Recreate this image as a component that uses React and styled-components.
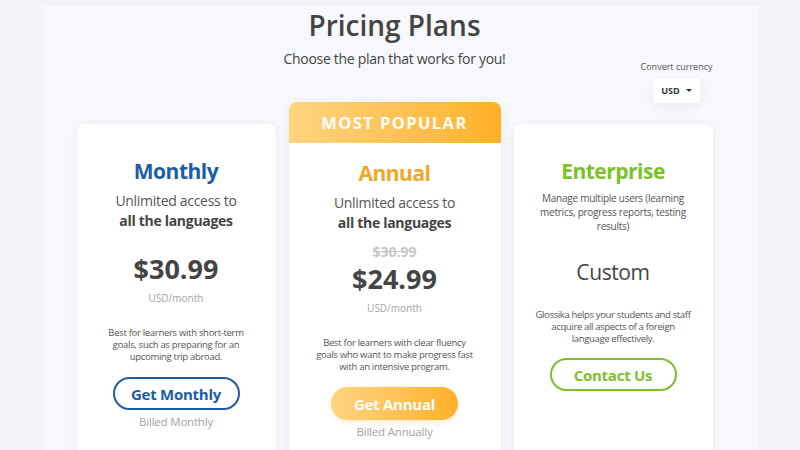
import React from "react";
import styled, { createGlobalStyle } from "styled-components";

const Global = createGlobalStyle`
  html, body { margin: 0; padding: 0; }
  body {
    background: #f3f4f9;
    font-family: "Open Sans", "Noto Sans", Arial, sans-serif;
    height: 450px;
    overflow: hidden;
  }
`;

const Page = styled.div`
  width: 715px;
  margin: 0 auto;
  min-height: 450px;
  background: #f7f8fc;
`;

const TopStrip = styled.div`
  height: 2px;
  background: #f2f3f6;
  box-shadow: 0 1px 4px rgba(0, 0, 0, 0.12);
`;

const Content = styled.div`
  width: 636px;
  margin-left: 34px;
  display: flex;
  flex-direction: column;
`;

const Title = styled.h1`
  margin: 6px 0 0;
  text-align: center;
  font-size: 28px;
  line-height: 34px;
  font-weight: 600;
  color: #444;
`;

const SubRow = styled.div`
  margin-top: 7px;
  display: grid;
  grid-template-columns: 1fr auto 1fr;
  align-items: start;
`;

const Subtitle = styled.p`
  grid-column: 2;
  margin: 0;
  font-size: 14px;
  letter-spacing: -0.3px;
  line-height: 20px;
  color: #444;
`;

const Currency = styled.div`
  grid-column: 3;
  justify-self: end;
  margin-top: 11px;
  display: flex;
  flex-direction: column;
  align-items: center;
`;

const CurrencyLabel = styled.span`
  font-size: 9px;
  line-height: 14px;
  color: #555;
`;

const CurrencySelect = styled.div`
  margin-top: 4px;
  width: 47px;
  height: 25px;
  background: #fff;
  border-radius: 2px;
  box-shadow: 0 3px 12px rgba(0, 0, 0, 0.06);
  display: flex;
  align-items: center;
  justify-content: center;
  gap: 6px;
  font-size: 9px;
  font-weight: 700;
  color: #333;
`;

const Caret = styled.span`
  width: 0;
  height: 0;
  border-left: 3px solid transparent;
  border-right: 3px solid transparent;
  border-top: 3.5px solid #333;
`;

const Cards = styled.div`
  margin-top: -1px;
  display: flex;
  align-items: flex-start;
  gap: 13px;
`;

const Card = styled.div`
  width: ${(p) => p.$w}px;
  margin-top: ${(p) => p.$top}px;
  background: #fff;
  border-radius: 8px;
  box-shadow: 0 2px 10px rgba(40, 50, 90, 0.07);
  display: flex;
  flex-direction: column;
  align-items: center;
  text-align: center;
  min-height: ${(p) => p.$h}px;
`;

const PopularHeader = styled.div`
  align-self: stretch;
  height: 41px;
  border-radius: 8px 8px 0 0;
  background: linear-gradient(90deg, #ffd47f 0%, #ffc153 55%, #ffb127 100%);
  display: flex;
  align-items: center;
  justify-content: center;
  color: #fff;
  font-size: 16.5px;
  font-weight: 700;
  letter-spacing: 1.4px;
`;

const PlanName = styled.h2`
  margin: ${(p) => p.$top}px 0 0;
  font-size: 21px;
  letter-spacing: -0.5px;
  line-height: 28px;
  font-weight: 700;
  color: ${(p) => p.$color};
`;

const Access = styled.p`
  margin: 6px 0 0;
  font-size: 14px;
  letter-spacing: -0.3px;
  line-height: 20px;
  color: #555;
  strong {
    font-weight: 700;
    color: #444;
  }
`;

const OldPrice = styled.div`
  margin-top: 11px;
  font-size: 14px;
  line-height: 16px;
  font-weight: 700;
  color: #c8c8c8;
  text-decoration: line-through;
`;

const Price = styled.div`
  margin-top: ${(p) => p.$top}px;
  font-size: 27px;
  line-height: 34px;
  font-weight: 700;
  color: #444;
`;

const Custom = styled.div`
  margin-top: 25px;
  font-size: 21px;
  letter-spacing: -0.4px;
  line-height: 28px;
  font-weight: 400;
  color: #444;
`;

const Unit = styled.div`
  margin-top: 4px;
  font-size: 10px;
  line-height: 16px;
  color: #a3a3a3;
`;

const Desc = styled.p`
  margin: ${(p) => p.$top}px 0 0;
  font-size: ${(p) => p.$size || 9.5}px;
  letter-spacing: ${(p) => p.$ls ?? -0.3}px;
  line-height: ${(p) => p.$lh || 12}px;
  color: #555;
`;

const Button = styled.button`
  margin-top: ${(p) => p.$top}px;
  width: 127px;
  height: 33px;
  border-radius: 17px;
  font-family: inherit;
  font-size: 15px;
  letter-spacing: -0.25px;
  font-weight: 700;
  cursor: pointer;
  display: flex;
  align-items: center;
  justify-content: center;
  color: ${(p) => (p.$filled ? "#fff" : p.$color)};
  border: ${(p) => (p.$filled ? "none" : `2px solid ${p.$color}`)};
  background: ${(p) =>
    p.$filled
      ? "linear-gradient(90deg, #ffd47f 0%, #ffc153 55%, #ffb127 100%)"
      : "#fff"};
  box-shadow: ${(p) => (p.$filled ? "0 2px 6px rgba(255, 170, 40, 0.25)" : "none")};
`;

const Billed = styled.div`
  margin-top: 4px;
  font-size: 11.5px;
  letter-spacing: -0.2px;
  line-height: 16px;
  color: #a3a3a3;
`;

const Lines = ({ lines, ...rest }) => (
  <Desc {...rest}>
    {lines.map((l, i) => (
      <React.Fragment key={i}>
        {l}
        {i < lines.length - 1 && <br />}
      </React.Fragment>
    ))}
  </Desc>
);

const BLUE = "#1b5ea7";
const ORANGE = "#f5a623";
const GREEN = "#7cc12b";

export default function App() {
  return (
    <>
      <Global />
      <Page>
        <TopStrip />
        <Content>
          <Title>Pricing Plans</Title>
          <SubRow>
            <Subtitle>Choose the plan that works for you!</Subtitle>
            <Currency>
              <CurrencyLabel>Convert currency</CurrencyLabel>
              <CurrencySelect>
                USD <Caret />
              </CurrencySelect>
            </Currency>
          </SubRow>
          <Cards>
            <Card $w={199} $top={22} $h={340}>
              <PlanName $top={33} $color={BLUE}>Monthly</PlanName>
              <Access>
                Unlimited access to
                <br />
                <strong>all the languages</strong>
              </Access>
              <Price $top={21}>$30.99</Price>
              <Unit>USD/month</Unit>
              <Lines
                $top={21}
                lines={[
                  "Best for learners with short-term",
                  "goals, such as preparing for an",
                  "upcoming trip abroad.",
                ]}
              />
              <Button $top={14} $color={BLUE}>Get Monthly</Button>
              <Billed>Billed Monthly</Billed>
            </Card>
            <Card $w={212} $top={0} $h={360}>
              <PopularHeader>MOST POPULAR</PopularHeader>
              <PlanName $top={16} $color={ORANGE}>Annual</PlanName>
              <Access>
                Unlimited access to
                <br />
                <strong>all the languages</strong>
              </Access>
              <OldPrice>$30.99</OldPrice>
              <Price $top={2}>$24.99</Price>
              <Unit>USD/month</Unit>
              <Lines
                $top={21}
                lines={[
                  "Best for learners with clear fluency",
                  "goals who want to make progress fast",
                  "with an intensive program.",
                ]}
              />
              <Button $top={14} $filled $color={ORANGE}>Get Annual</Button>
              <Billed>Billed Annually</Billed>
            </Card>
            <Card $w={199} $top={22} $h={340}>
              <PlanName $top={33} $color={GREEN}>Enterprise</PlanName>
              <Lines
                $top={6}
                $size={10}
                $ls={-0.25}
                $lh={14}
                lines={[
                  "Manage multiple users (learning",
                  "metrics, progress reports, testing",
                  "results)",
                ]}
              />
              <Custom>Custom</Custom>
              <Lines
                $top={23}
                $ls={-0.35}
                lines={[
                  "Glossika helps your students and staff",
                  "acquire all aspects of a foreign",
                  "language effectively.",
                ]}
              />
              <Button $top={13} $color={GREEN}>Contact Us</Button>
            </Card>
          </Cards>
        </Content>
      </Page>
    </>
  );
}
